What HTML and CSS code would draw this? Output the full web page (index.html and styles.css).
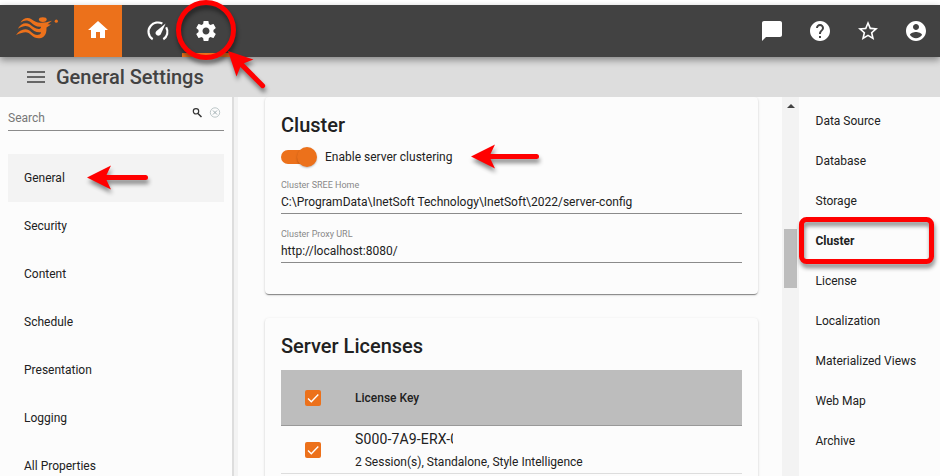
FILE: index.html
```
<!DOCTYPE html>
<html lang="en">
<head>
<meta charset="utf-8">
<title>General Settings</title>
<link rel="stylesheet" href="styles.css">
</head>
<body>
<header class="topbar">
  <div class="logo">
    <svg width="44" height="24" viewBox="0 0 44 24" fill="#ec711b">
      <ellipse cx="26.800" cy="3.600" rx="3.900" ry="2.300"/>
      <circle cx="40.300" cy="5.200" r="1.600"/>
      <path d="M4.500 6.800C6.500 2.500 11.500 .8 15.500 3.200C19 5.500 21 7 25 6.800C29.500 6.800 31.500 6 36 4.800L31.500 8.300L35 8.600L30.500 11.500C30.700 15.500 30 18.800 27.500 20.800C23.500 23.500 18.500 22.300 15.500 19.300C11.500 15.300 9 15.200 0 19C3.500 14 8.500 11.800 13 14.200C17 16.800 18.500 20 23.500 18.500C24.500 18 25 17.200 25 16.200C20 16.800 17 14.500 14.500 12C11 9.200 8 9.300 1.800 12.800C4.500 7.800 9.500 5.800 14 8.500C17.500 11 19.500 13.300 23.500 12.900C24.500 12.700 25 12 25 10.800C20.500 11.300 18 9 15 6.500C11.500 3.800 8.500 3.900 4.500 6.800Z"/>
    </svg>
  </div>
  <a class="tab home"><svg class="icon" viewBox="0 0 24 24"><path d="M10 20v-6h4v6h5v-8h3L12 3 2 12h3v8z"/></svg></a>
  <a class="tab monitor"><svg class="icon" viewBox="0 0 24 24"><g fill="none" stroke="#fff" stroke-width="2.2"><path d="M6.700 20.200C1.800 17.500 1.400 10.700 4.600 7C7.600 3.300 12.500 2.700 16.400 4.400"/><path d="M20.200 8.300C22.700 12.700 21.300 17.900 17.300 20.200"/></g><path d="M19.600 4.500L14.900 15C13.900 17.100 11 17.200 9.900 15.300C9.200 14 9.600 12.800 10.500 11.900Z"/></svg></a>
  <a class="tab settings"><svg class="icon" viewBox="0 0 24 24"><path d="M19.430 12.980c.04-.32.07-.64.07-.98s-.03-.66-.07-.98l2.110-1.650c.19-.15.24-.42.12-.64l-2-3.460c-.12-.22-.39-.3-.61-.22l-2.490 1c-.52-.4-1.080-.73-1.690-.98l-.38-2.650C14.460 2.180 14.250 2 14 2h-4c-.25 0-.46.18-.49.42l-.38 2.650c-.61.25-1.170.59-1.690.98l-2.490-1c-.23-.09-.49 0-.61.22l-2 3.460c-.13.22-.07.49.12.64l2.110 1.650c-.04.32-.07.65-.07.98s.03.66.07.98l-2.110 1.650c-.19.15-.24.42-.12.64l2 3.460c.12.22.39.3.61.22l2.490-1c.52.4 1.080.73 1.690.98l.38 2.650c.03.24.24.42.49.42h4c.25 0 .46-.18.49-.42l.38-2.650c.61-.25 1.170-.59 1.690-.98l2.490 1c.23.09.49 0 .61-.22l2-3.460c.12-.22.07-.49-.12-.64l-2.110-1.650zM12 15.500c-1.930 0-3.500-1.570-3.500-3.500s1.570-3.500 3.500-3.500 3.500 1.570 3.500 3.500-1.570 3.500-3.500 3.500z"/></svg></a>
  <div class="actions">
    <svg class="icon" viewBox="0 0 24 24"><path d="M20 2H4c-1.100 0-2 .9-2 2v18l4-4h14c1.100 0 2-.9 2-2V4c0-1.100-.9-2-2-2z"/></svg>
    <svg class="icon" viewBox="0 0 24 24"><path d="M12 2C6.480 2 2 6.480 2 12s4.480 10 10 10 10-4.480 10-10S17.520 2 12 2zm1 17h-2v-2h2v2zm2.070-7.750l-.9.920C13.450 12.900 13 13.500 13 15h-2v-.5c0-1.100.45-2.100 1.170-2.830l1.240-1.260c.37-.36.59-.86.59-1.410 0-1.100-.9-2-2-2s-2 .9-2 2H8c0-2.210 1.790-4 4-4s4 1.790 4 4c0 .88-.36 1.680-.93 2.250z"/></svg>
    <svg class="icon" viewBox="0 0 24 24"><path d="M22 9.240l-7.190-.62L12 2 9.190 8.630 2 9.240l5.460 4.730L5.820 21 12 17.270 18.180 21l-1.630-7.030L22 9.240zM12 15.400l-3.760 2.270 1-4.280-3.320-2.880 4.380-.38L12 6.100l1.710 4.040 4.380.38-3.320 2.880 1 4.280L12 15.400z"/></svg>
    <svg class="icon" viewBox="0 0 24 24"><path d="M12 2C6.480 2 2 6.480 2 12s4.480 10 10 10 10-4.480 10-10S17.520 2 12 2zm0 3c1.660 0 3 1.340 3 3s-1.340 3-3 3-3-1.340-3-3 1.340-3 3-3zm0 14.200c-2.500 0-4.710-1.280-6-3.220.03-1.990 4-3.080 6-3.080 1.990 0 5.970 1.090 6 3.080-1.290 1.940-3.500 3.220-6 3.220z"/></svg>
  </div>
</header>
<div class="titlebar"><span class="menu"></span><h1>General Settings</h1></div>
<div class="body">
  <nav class="sidebar">
    <div class="search"><span>Search</span>
      <svg width="30" height="14" viewBox="0 0 30 14" fill="none"><circle cx="5" cy="5.300" r="2.700" stroke="#333" stroke-width="1.200"/><path d="M7 7.500L10.500 11" stroke="#333" stroke-width="1.500"/><circle cx="24" cy="6.500" r="4.700" stroke="#b4bfc2" stroke-width=".9"/><path d="M22 4.500l4 4m0-4l-4 4" stroke="#9eacb0"/></svg>
    </div>
    <ul>
      <li class="active">General</li><li>Security</li><li>Content</li><li>Schedule</li><li>Presentation</li><li>Logging</li><li>All Properties</li>
    </ul>
  </nav>
  <main>
    <section class="card cluster">
      <h2>Cluster</h2>
      <div class="switch"><span class="track"><i></i></span><span>Enable server clustering</span></div>
      <div class="field"><label>Cluster SREE Home</label><div>C:\ProgramData\InetSoft Technology\InetSoft\2022/server-config</div></div>
      <div class="field"><label>Cluster Proxy URL</label><div>http://localhost:8080/</div></div>
    </section>
    <section class="card licenses">
      <h2>Server Licenses</h2>
      <div class="row head"><svg class="check" viewBox="0 0 16 16"><path d="M3 8.500L6.300 11.800L13.300 4.500"/></svg><b>License Key</b></div>
      <div class="row"><svg class="check" viewBox="0 0 16 16"><path d="M3 8.500L6.300 11.800L13.300 4.500"/></svg><div><div class="key">S000-7A9-ERX-0</div><div class="detail">2 Session(s), Standalone, Style Intelligence</div></div></div>
    </section>
  </main>
  <div class="scrollbar"><span class="up"></span><span class="thumb"></span></div>
  <nav class="toc"><ul>
    <li>Data Source</li><li>Database</li><li>Storage</li><li class="current">Cluster</li><li>License</li><li>Localization</li><li>Materialized Views</li><li>Web Map</li><li>Archive</li>
  </ul></nav>
</div>
<svg class="callouts" width="940" height="476" viewBox="0 0 940 476">
  <g class="mark">
    <circle cx="206" cy="30" r="27.500" fill="none" stroke="#f00" stroke-width="5"/>
    <rect x="801.500" y="219.500" width="130" height="42" rx="5" fill="none" stroke="#f00" stroke-width="5"/>
    <path d="M87 177.500L111 165.500L106.500 175H145.500a2.500 2.500 0 0 1 0 5H106.500L111 189.500Z"/>
    <path d="M471 156.500L495 144.500L490.500 154H536.500a2.500 2.500 0 0 1 0 5H490.500L495 168.500Z"/>
    <path d="M0 0L24 -12L20 -2.500H49a2.500 2.500 0 0 1 0 5H20L24 12Z" transform="translate(228 51) rotate(45)"/>
  </g>
</svg>
</body>
</html>
```
FILE: styles.css
```
* { box-sizing: border-box; }
body { margin: 0; padding-top: 5px; width: 940px; height: 476px; overflow: hidden; position: relative; background: #fff; color: #212121; font: 12px/16px Roboto, sans-serif; }
ul { list-style: none; margin: 0; padding: 0; }
h1, h2 { margin: 0; font-size: 20px; line-height: 24px; font-weight: 500; }
.topbar { display: flex; align-items: stretch; height: 52px; background: #424242; position: relative; z-index: 1; box-shadow: 0 3px 7px rgba(0,0,0,.4); }
.logo { width: 74px; padding: 11px 0 0 16px; }
.tab { display: flex; align-items: center; justify-content: center; width: 48px; }
.home { background: #ec711b; }
.monitor { margin-left: 12px; }
.settings { border-bottom: 4px solid #ec711b; padding-top: 4px; }
.icon { width: 24px; height: 24px; fill: #fff; display: block; }
.home .icon { margin-top: -3px; }
.settings .icon { margin-top: -1px; }
.actions { display: flex; align-items: center; gap: 24px; margin-left: auto; padding-right: 12px; }
.titlebar { display: flex; align-items: center; gap: 11px; height: 40px; padding-left: 27px; background: #ddd; color: #424242; }
.menu { width: 18px; height: 12px; border: solid #666; border-width: 2px 0; background: linear-gradient(#666, #666) 0 3px / 100% 2px no-repeat; }
.body { display: flex; height: 379px; background: #fcfcfc; }
.sidebar { width: 238px; padding-left: 8px; padding-right: 8px; border-right: 4px solid #f3f3f3; box-shadow: inset -2px 0 #ddd; }
.search { display: flex; justify-content: space-between; width: 216px; height: 34px; padding: 13px 3px 0 0; border-bottom: 1px solid #8b8b8b; color: #777; }
.search svg { margin-top: -4px; }
.sidebar ul { width: 216px; margin-top: 23px; }
.sidebar li { height: 48px; padding: 16px; }
.sidebar .active { background: #f3f3f3; }
main { width: 544px; padding-left: 27px; overflow: hidden; }
.card { width: 493px; padding: 16px; border-radius: 4px; background: #fcfcfc; box-shadow: 0 2px 1px -1px rgba(0,0,0,.3), 0 1px 1px rgba(0,0,0,.16), 0 1px 3px rgba(0,0,0,.15); }
.cluster { height: 197px; margin-bottom: 24px; }
.switch { display: flex; align-items: center; gap: 8px; height: 24px; margin-top: 8px; }
.track { width: 36px; height: 14px; border-radius: 7px; background: linear-gradient(90deg, #ec711b 30px, transparent 30px); }
.track i { display: block; width: 20px; height: 20px; margin: -3px 0 0 16px; border-radius: 50%; background: #ec711b; box-shadow: 0 1px 2px rgba(0,0,0,.25); }
.field { height: 45px; padding-top: 8px; border-bottom: 1px solid #8b8b8b; }
.field + .field { height: 49px; padding-top: 12px; }
.field label { display: block; font-size: 9px; line-height: 17px; color: #888; }
.licenses { height: 200px; }
.licenses h2 { margin-bottom: 12px; }
.row { display: flex; align-items: center; height: 48px; padding-left: 24px; border-bottom: 1px solid #ddd; }
.head { height: 56px; background: #bdbdbd; border-color: #999; }
.head b { font-weight: 500; }
.check { width: 16px; height: 16px; margin-right: 34px; border-radius: 2px; background: #ec711b; fill: none; stroke: #fff; stroke-width: 1.4; }
.key { width: 98px; overflow: hidden; font-size: 14px; line-height: 18px; letter-spacing: .14px; white-space: nowrap; }
.detail { margin-top: 6px; }
.scrollbar { width: 17px; background: #f3f3f3; }
.up { display: block; width: 7px; margin: 7px auto 0 5px; border: solid transparent; border-width: 0 4px 4px; border-bottom-color: #424242; }
.thumb { display: block; width: 13px; height: 59px; margin: 121px 0 0 2px; background: #bdbdbd; }
.toc { padding: 4px 0 0 16.5px; }
.toc li { height: 40px; padding-top: 12px; }
.current { font-weight: 700; }
.callouts { position: absolute; inset: 0; z-index: 2; }
.mark { fill: #f00; filter: drop-shadow(1px 4px 2px rgba(0,0,0,.45)); }
```
